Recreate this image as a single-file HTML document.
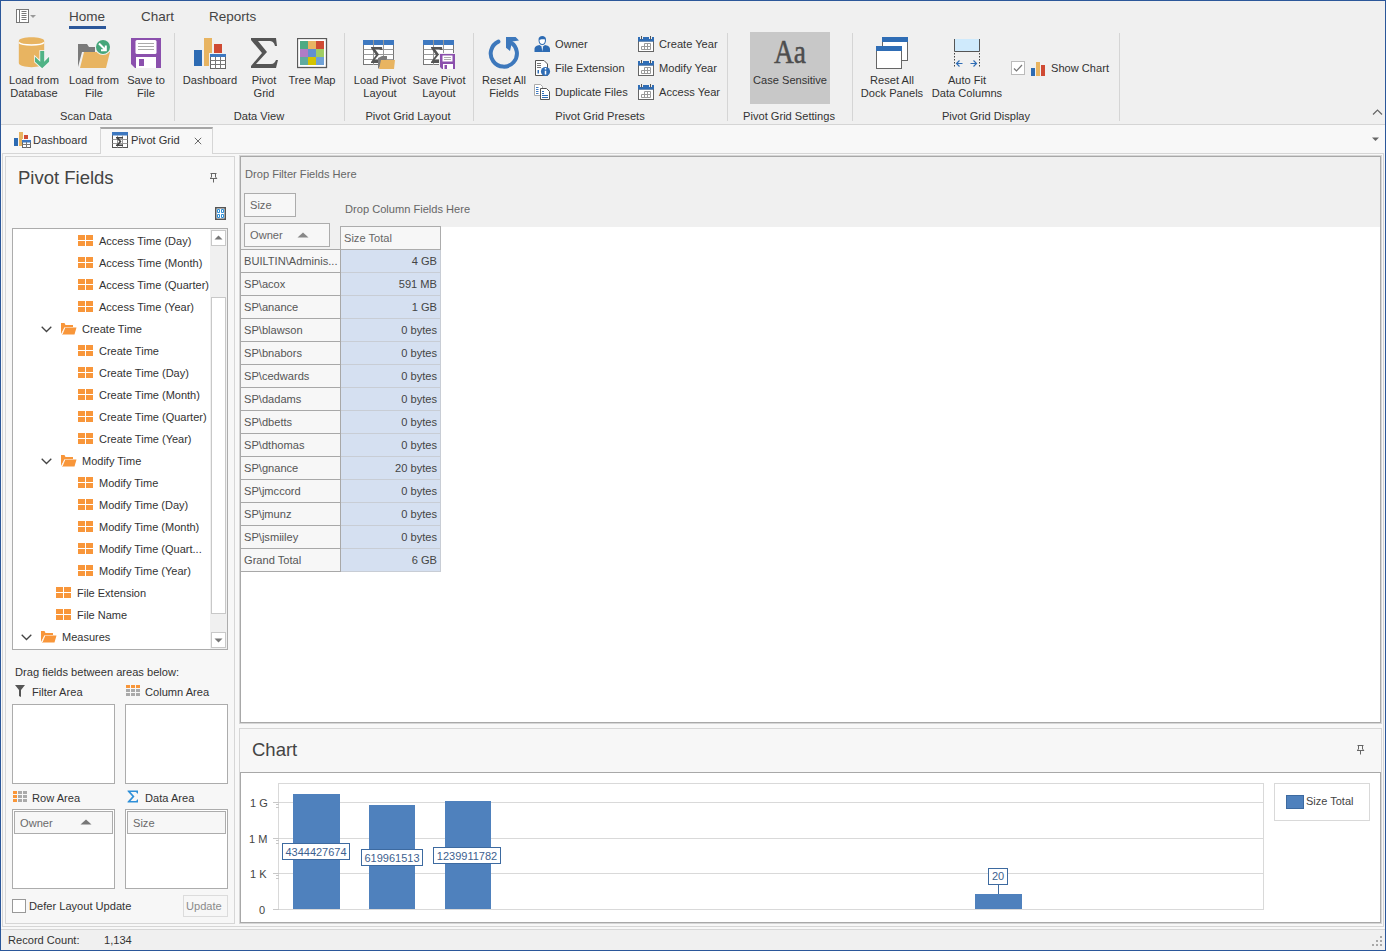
<!DOCTYPE html>
<html><head><meta charset="utf-8">
<style>
*{box-sizing:border-box;margin:0;padding:0}
html,body{width:1386px;height:951px;overflow:hidden;background:#f0f0f0;font-family:"Liberation Sans",sans-serif;color:#333;font-size:11.1px}
.a{position:absolute}
.t{position:absolute;white-space:nowrap;line-height:13px}
#win{position:absolute;left:0;top:0;width:1386px;height:951px;border:1px solid #2b579a;background:#f0f0f0}
.sep{position:absolute;width:1px;background:#d5d5d5}
.bl{position:absolute;margin-top:1px;text-align:center;white-space:nowrap;line-height:13px;color:#333}
.gl{position:absolute;margin-top:1px;text-align:center;white-space:nowrap;line-height:13px;color:#333}
</style></head><body>
<div id="win"></div>
<!-- RIBBON -->
<div class="a" style="left:1px;top:1px;width:1384px;height:123px;background:#f0f0f0"></div>
<!-- quick access -->
<svg class="a" style="left:15px;top:8px" width="22" height="16" viewBox="0 0 22 16">
<rect x="1.5" y="1.5" width="12" height="13" fill="#fff" stroke="#777" stroke-width="1"/>
<line x1="4.5" y1="2" x2="4.5" y2="14" stroke="#777"/>
<path d="M6.5 3.5h5M6.5 5.5h5M6.5 7.5h5M6.5 9.5h5M6.5 11.5h5" stroke="#777"/>
<path d="M15 7h6l-3 3z" fill="#999"/>
</svg>
<div class="t" style="left:69px;top:9px;font-size:13.5px;line-height:16px;color:#444">Home</div>
<div class="a" style="left:69px;top:26px;width:37px;height:3px;background:#2b579a"></div>
<div class="t" style="left:141px;top:9px;font-size:13.5px;line-height:16px;color:#444">Chart</div>
<div class="t" style="left:209px;top:9px;font-size:13.5px;line-height:16px;color:#444">Reports</div>
<div class="a" style="left:1px;top:124px;width:1384px;height:1px;background:#d5d5d5"></div>

<!-- Scan Data group -->
<svg class="a" style="left:18px;top:36px" width="34" height="34" viewBox="0 0 34 34">
<path d="M0.8 5 C0.8 0,26.2 0,26.2 5 L26.2 27 C26.2 32.5,0.8 32.5,0.8 27 Z" fill="#e8b461"/>
<path d="M1 6.5 C4 9.8,23 9.8,26 6.5" stroke="#fff" stroke-width="1.3" fill="none"/>
<path d="M22.2 15 H26.2 V25.7 L31.1 20.7 V25.8 L24.2 32.3 L17 25.8 V20.7 L22.2 25.7Z" fill="#50b386" stroke="#f6f6f6" stroke-width="1.6" paint-order="stroke"/>
</svg>
<svg class="a" style="left:77px;top:38px" width="34" height="32" viewBox="0 0 34 32">
<path d="M1 29 L1 6 L10 6 L12 9 L18 9 L18 14 L5 14 Z" fill="#7a7a7a"/>
<path d="M3 30 L7 14 L33 14 L29 30 Z" fill="#e8b461"/>
<circle cx="26" cy="9" r="8" fill="#f0f0f0"/>
<circle cx="26" cy="9" r="7" fill="#45a67a"/>
<path d="M22 5.5 L28.5 12 M28.8 7.5 V12.2 H24" stroke="#fff" stroke-width="2" fill="none"/>
</svg>
<svg class="a" style="left:131px;top:38px" width="30" height="30" viewBox="0 0 30 30">
<path d="M0 0 H30 V30 H4 L0 26 Z" fill="#8b50ad"/>
<rect x="4.5" y="2" width="21" height="14" rx="1.5" fill="#fff"/>
<path d="M7 5.5h16M7 8.5h16M7 11.5h16" stroke="#aaa" stroke-width="1"/>
<rect x="5" y="19" width="20" height="11" fill="#fff"/>
<rect x="8" y="21" width="5" height="7" fill="#8b50ad"/>
</svg>
<div class="bl" style="left:4px;top:73px;width:60px">Load from<br>Database</div>
<div class="bl" style="left:64px;top:73px;width:60px">Load from<br>File</div>
<div class="bl" style="left:121px;top:73px;width:50px">Save to<br>File</div>
<div class="gl" style="left:36px;top:109px;width:100px">Scan Data</div>
<div class="sep" style="left:174px;top:33px;height:88px"></div>

<!-- Data View group -->
<svg class="a" style="left:193px;top:37px" width="34" height="33" viewBox="0 0 34 33">
<rect x="1" y="13" width="8" height="16" fill="#2d6bb3"/>
<rect x="11" y="1" width="8" height="28" fill="#e8b461"/>
<rect x="21" y="7" width="8" height="9" fill="#cf4a33"/>
<rect x="16" y="16" width="18" height="17" fill="#f0f0f0"/>
<rect x="17.5" y="17.5" width="15" height="14" fill="#fff" stroke="#666" stroke-width="1"/>
<rect x="17" y="17" width="16" height="3" fill="#3d78c0"/>
<path d="M17.5 23.5h15M17.5 27.5h15M22.5 20v12M27.5 20v12" stroke="#777" stroke-width="1"/>
</svg>
<svg class="a" style="left:250px;top:37px" width="28" height="32" viewBox="0 0 28 32">
<path d="M1 1 H26 L27 9 H25 C24 5,22 4,19 4 H8 L17 15 L6 27 H21 C24 27,25 25,26 23 H28 L26 31 H1 V29 L12 16 L1 3 Z" fill="#555"/>
</svg>
<svg class="a" style="left:297px;top:38px" width="31" height="31" viewBox="0 0 31 31">
<rect x="0.5" y="0.5" width="29" height="29" fill="#fff" stroke="#5a5a5a" stroke-width="1.3"/>
<rect x="3" y="3" width="8" height="8" fill="#4daa83"/><rect x="11" y="3" width="8" height="8" fill="#e9b462"/><rect x="19" y="3" width="8" height="8" fill="#cf4a33"/>
<rect x="3" y="11" width="8" height="8" fill="#b07cc6"/><rect x="11" y="11" width="8" height="8" fill="#6290d0"/><rect x="19" y="11" width="8" height="8" fill="#a0cd63"/>
<rect x="3" y="19" width="8" height="8" fill="#5fab9f"/><rect x="11" y="19" width="8" height="8" fill="#d3c300"/><rect x="19" y="19" width="8" height="8" fill="#6fa1d6"/>
</svg>
<div class="bl" style="left:180px;top:73px;width:60px">Dashboard</div>
<div class="bl" style="left:240px;top:73px;width:48px">Pivot<br>Grid</div>
<div class="bl" style="left:284px;top:73px;width:56px">Tree Map</div>
<div class="gl" style="left:209px;top:109px;width:100px">Data View</div>
<div class="sep" style="left:344px;top:33px;height:88px"></div>

<!-- Pivot Grid Layout -->
<svg class="a" style="left:362px;top:39px" width="34" height="31" viewBox="0 0 34 31">
<rect x="1.5" y="1.5" width="30" height="24" fill="#fff" stroke="#777" stroke-width="1"/>
<rect x="1" y="1" width="31" height="5" fill="#3d78c0"/>
<path d="M1.5 10.5h30M1.5 15.5h30M1.5 20.5h30M11.5 1v25M21.5 1v25" stroke="#999" stroke-width="1"/>
<path d="M9 8 H20 L20.5 11 H18.5 C18 10,17 10,16 10 H13 L17 15.5 L12.5 21 H17 C18 21,19 20.5,19.5 19.5 H21 L20 24 H9 V23 L14 16 L9 9Z" fill="#555"/>
<path d="M16 30 V19 L20 17 L25 17 L25 20 L16 30Z" fill="#7a7a7a"/>
<path d="M17 30 L19 21 H33 L32 30Z" fill="#e8b461"/>
</svg>
<svg class="a" style="left:422px;top:39px" width="34" height="31" viewBox="0 0 34 31">
<rect x="1.5" y="1.5" width="30" height="24" fill="#fff" stroke="#777" stroke-width="1"/>
<rect x="1" y="1" width="31" height="5" fill="#3d78c0"/>
<path d="M1.5 10.5h30M1.5 15.5h30M1.5 20.5h30M11.5 1v25M21.5 1v25" stroke="#999" stroke-width="1"/>
<path d="M9 8 H20 L20.5 11 H18.5 C18 10,17 10,16 10 H13 L17 15.5 L12.5 21 H17 C18 21,19 20.5,19.5 19.5 H21 L20 24 H9 V23 L14 16 L9 9Z" fill="#555"/>
<rect x="17" y="14" width="17" height="17" fill="#f0f0f0"/>
<path d="M18 15 H33 V30 H20 L18 28Z" fill="#8b50ad"/>
<rect x="20.5" y="16.5" width="10" height="6" fill="#fff"/>
<path d="M22 18.5h7M22 20.5h7" stroke="#999" stroke-width="0.8"/>
<rect x="21" y="25" width="10" height="5" fill="#fff"/>
<rect x="22.5" y="26" width="2.5" height="4" fill="#8b50ad"/>
</svg>
<div class="bl" style="left:347px;top:73px;width:66px">Load Pivot<br>Layout</div>
<div class="bl" style="left:406px;top:73px;width:66px">Save Pivot<br>Layout</div>
<div class="gl" style="left:358px;top:109px;width:100px">Pivot Grid Layout</div>
<div class="sep" style="left:473px;top:33px;height:88px"></div>

<!-- Pivot Grid Presets -->
<svg class="a" style="left:487px;top:36px" width="34" height="34" viewBox="0 0 34 34">
<path d="M11.4 5.6 A13.1 13.1 0 1 0 23.4 6.2" stroke="#3d78bc" stroke-width="4" fill="none" stroke-linecap="round"/>
<path d="M19 1 H28.6 L32 4.6 L25.2 5.4 L23 15 L19 11.8Z" fill="#3d78bc"/>
</svg>
<div class="bl" style="left:476px;top:73px;width:56px">Reset All<br>Fields</div>

<svg class="a" style="left:534px;top:36px" width="17" height="16" viewBox="0 0 17 16">
<path d="M0.5 16 V13 C0.5 10.5,3 9.5,5.5 9 L8.3 11 L11 9 C13.5 9.5,16 10.5,16 13 V16Z" fill="#2d6bb3"/>
<path d="M7.5 10.5 L8.3 15.5 L9 10.5Z" fill="#fff"/>
<path d="M4.5 4 C4.5 1,6 0,8.3 0 C10.5 0,12 1,12 4 C12 7,10.5 9,8.3 9 C6 9,4.5 7,4.5 4Z" fill="#2d6bb3"/>
<path d="M5.5 4 C6.5 3,9 3,11 3.5 C11 6.5,10 8,8.3 8 C6.5 8,5.5 6.5,5.5 4Z" fill="#fff"/>
</svg>
<div class="t" style="left:555px;top:38px">Owner</div>
<svg class="a" style="left:534px;top:60px" width="17" height="16" viewBox="0 0 17 16">
<path d="M1.5 0.5 H10 L13.5 4 V15.5 H1.5Z" fill="#fff" stroke="#555" stroke-width="1"/>
<path d="M3 3.5h4M3 5.5h4M3 7.5h4" stroke="#777" stroke-width="1"/>
<rect x="3.5" y="10" width="1.5" height="3.5" fill="#2f6db5"/>
<circle cx="11.5" cy="11.5" r="4.6" fill="#2f6db5"/>
<path d="M11.5 10.8v3.7M11.5 8v1.5" stroke="#fff" stroke-width="1.5"/>
</svg>
<div class="t" style="left:555px;top:62px">File Extension</div>
<svg class="a" style="left:534px;top:84px" width="17" height="16" viewBox="0 0 17 16">
<path d="M0.5 0.5 H6.5 L8.5 2.5 V11.5 H0.5Z" fill="#fff" stroke="#aaa" stroke-width="1"/>
<path d="M2 3.5h2.5M2 5.5h2.5M2 7.5h2.5M2 9.5h2.5" stroke="#3d78c0" stroke-width="1"/>
<path d="M6.5 4.5 H12.5 L15.5 7.5 V15.5 H6.5Z" fill="#fff" stroke="#555" stroke-width="1"/>
<path d="M8 7.5h2M8 9.5h2M8 11.5h6M8 13.5h6" stroke="#2f6db5" stroke-width="1"/>
</svg>
<div class="t" style="left:555px;top:86px">Duplicate Files</div>
<svg class="a" style="left:637px;top:36px" width="18" height="17" viewBox="0 0 18 17"><rect x="1.5" y="5" width="15" height="10.5" fill="#fff" stroke="#666" stroke-width="1"/><path d="M1 3h16v2.5H1zM1 1h2v2H1zM6 1h6v2H6zM15 1h2v2h-2z" fill="#2f6db5"/><path d="M4.5 0v3.5M13.5 0v3.5" stroke="#555" stroke-width="1"/><path d="M4.5 10.5h9v3h-9zM7.5 7.5h6v3M7.5 7.5v6M10.5 7.5v6" stroke="#999" stroke-width="1" fill="none"/></svg>
<div class="t" style="left:659px;top:38px">Create Year</div>
<svg class="a" style="left:637px;top:60px" width="18" height="17" viewBox="0 0 18 17"><rect x="1.5" y="5" width="15" height="10.5" fill="#fff" stroke="#666" stroke-width="1"/><path d="M1 3h16v2.5H1zM1 1h2v2H1zM6 1h6v2H6zM15 1h2v2h-2z" fill="#2f6db5"/><path d="M4.5 0v3.5M13.5 0v3.5" stroke="#555" stroke-width="1"/><path d="M4.5 10.5h9v3h-9zM7.5 7.5h6v3M7.5 7.5v6M10.5 7.5v6" stroke="#999" stroke-width="1" fill="none"/></svg>
<div class="t" style="left:659px;top:62px">Modify Year</div>
<svg class="a" style="left:637px;top:84px" width="18" height="17" viewBox="0 0 18 17"><rect x="1.5" y="5" width="15" height="10.5" fill="#fff" stroke="#666" stroke-width="1"/><path d="M1 3h16v2.5H1zM1 1h2v2H1zM6 1h6v2H6zM15 1h2v2h-2z" fill="#2f6db5"/><path d="M4.5 0v3.5M13.5 0v3.5" stroke="#555" stroke-width="1"/><path d="M4.5 10.5h9v3h-9zM7.5 7.5h6v3M7.5 7.5v6M10.5 7.5v6" stroke="#999" stroke-width="1" fill="none"/></svg>
<div class="t" style="left:659px;top:86px">Access Year</div>
<div class="gl" style="left:550px;top:109px;width:100px">Pivot Grid Presets</div>
<div class="sep" style="left:727px;top:33px;height:88px"></div>

<!-- Settings -->
<div class="a" style="left:750px;top:32px;width:80px;height:72px;background:#c8c8c8"></div>
<svg class="a" style="left:770px;top:36px" width="40" height="30" viewBox="0 0 40 30"><text x="4" y="26.8" font-family="Liberation Serif" font-size="33" fill="#4d4d4d" stroke="#4d4d4d" stroke-width="0.5" textLength="32" lengthAdjust="spacingAndGlyphs">Aa</text></svg>
<div class="bl" style="left:750px;top:73px;width:80px">Case Sensitive</div>
<div class="gl" style="left:739px;top:109px;width:100px">Pivot Grid Settings</div>
<div class="sep" style="left:852px;top:33px;height:88px"></div>

<!-- Display -->
<svg class="a" style="left:875px;top:36px" width="34" height="34" viewBox="0 0 34 34">
<rect x="7.5" y="1.5" width="25" height="23" fill="#fff" stroke="#666" stroke-width="1"/>
<rect x="7" y="1" width="26" height="5" fill="#2f6db5"/>
<rect x="1.5" y="10.5" width="25" height="22" fill="#fff" stroke="#666" stroke-width="1"/>
<rect x="1" y="10" width="26" height="5" fill="#2f6db5"/>
</svg>
<div class="bl" style="left:856px;top:73px;width:72px">Reset All<br>Dock Panels</div>
<svg class="a" style="left:953px;top:38px" width="28" height="30" viewBox="0 0 28 30">
<rect x="1" y="1" width="26" height="12" fill="#cfeafc"/>
<path d="M1.5 1v12.5h25V1" stroke="#555" stroke-width="1" fill="none"/>
<path d="M1.5 15v15M26.5 15v15" stroke="#444" stroke-width="1" stroke-dasharray="1.5 1.5"/>
<path d="M3.5 25.5h6M6.5 22.5l-3 3 3 3M17.5 25.5h6M20.5 22.5l3 3-3 3" stroke="#2f6db5" stroke-width="1.2" fill="none"/>
</svg>
<div class="bl" style="left:926px;top:73px;width:82px">Auto Fit<br>Data Columns</div>
<div class="a" style="left:1011px;top:61px;width:14px;height:14px;background:#fff;border:1px solid #bbb"></div>
<svg class="a" style="left:1011px;top:61px" width="14" height="14" viewBox="0 0 14 14"><path d="M3 7.5 L5.5 10 L11 4" stroke="#777" stroke-width="1.2" fill="none"/></svg>
<svg class="a" style="left:1031px;top:61px" width="15" height="15" viewBox="0 0 15 15">
<rect x="0" y="7" width="4" height="8" fill="#2d6bb3"/><rect x="5" y="1" width="4" height="14" fill="#e8b461"/><rect x="10" y="4" width="4" height="11" fill="#cf4a33"/>
</svg>
<div class="t" style="left:1051px;top:62px">Show Chart</div>
<div class="gl" style="left:936px;top:109px;width:100px">Pivot Grid Display</div>
<div class="sep" style="left:1119px;top:33px;height:88px"></div>
<svg class="a" style="left:1372px;top:108px" width="12" height="8" viewBox="0 0 12 8"><path d="M1 6.5 L5.5 2 L10 6.5" stroke="#666" stroke-width="1.2" fill="none"/></svg>

<!-- DOC TAB STRIP -->
<div class="a" style="left:1px;top:125px;width:1384px;height:825px;background:#f8f8f8"></div>
<div class="a" style="left:2px;top:153px;width:98px;height:1px;background:#d6d6d6"></div>
<div class="a" style="left:212px;top:153px;width:1172px;height:1px;background:#d6d6d6"></div>
<div class="a" style="left:100px;top:127px;width:113px;height:27px;border:1px solid #d6d6d6;border-top:2px solid #a6a6a6;border-bottom:none;background:#f8f8f8"></div>
<svg class="a" style="left:14px;top:132px" width="17" height="16" viewBox="0 0 17 16">
<rect x="0" y="6" width="4" height="8" fill="#2d6bb3"/><rect x="5" y="0" width="4" height="14" fill="#e8b461"/><rect x="10" y="3" width="4" height="4" fill="#cf4a33"/>
<rect x="8" y="7" width="9" height="9" fill="#f8f8f8"/>
<rect x="8.5" y="8.5" width="8" height="7" fill="#fff" stroke="#666" stroke-width="1"/><rect x="8" y="8" width="9" height="2.5" fill="#3d78c0"/><path d="M8.5 12.5h8M12.5 10v6" stroke="#777" stroke-width="1"/>
</svg>
<div class="t" style="left:33px;top:134px">Dashboard</div>
<svg class="a" style="left:112px;top:132px" width="17" height="16" viewBox="0 0 17 16">
<rect x="0.5" y="0.5" width="15" height="15" fill="#fff" stroke="#555" stroke-width="1"/>
<rect x="0" y="0" width="16" height="3.5" fill="#3d78c0"/>
<path d="M0.5 7.5h15M0.5 11.5h15M5.5 3.5v12M10.5 3.5v12" stroke="#999" stroke-width="1"/>
<path d="M4 5 H11 V6.5 H7 L9.5 9.5 L7 12.5 H11 V14 H4 V13 L7.5 9.5 L4 6Z" fill="#444"/>
</svg>
<div class="t" style="left:131px;top:134px">Pivot Grid</div>
<svg class="a" style="left:194px;top:137px" width="8" height="8" viewBox="0 0 8 8"><path d="M0.8 0.8 L7.2 7.2M7.2 0.8 L0.8 7.2" stroke="#6a6a6a" stroke-width="1"/></svg>
<svg class="a" style="left:1371px;top:137px" width="9" height="5" viewBox="0 0 9 5"><path d="M1 0.5 H8 L4.5 4Z" fill="#666"/></svg>
<!-- outer container lines -->
<div class="a" style="left:1383px;top:153px;width:1px;height:774px;background:#d6d6d6"></div>
<div class="a" style="left:2px;top:153px;width:1px;height:774px;background:#d6d6d6"></div>
<div class="a" style="left:2px;top:926px;width:1382px;height:1px;background:#d6d6d6"></div>

<!-- LEFT PANEL -->
<div class="a" style="left:5px;top:156px;width:230px;height:768px;border:1px solid #d6d6d6;background:#f7f7f7"></div>
<div class="t" style="left:18px;top:167px;font-size:18.5px;line-height:22px;color:#444">Pivot Fields</div>
<svg class="a" style="left:210px;top:172px" width="8" height="11" viewBox="0 0 8 11"><path d="M0.5 1.5h6M1.5 1.5v3.5M5.5 1.5v3.5M0 6.5h7M3.5 6.5v4M1.5 5 L0.2 6.5M5.5 5 L6.8 6.5" stroke="#666" stroke-width="1" fill="none"/></svg>
<svg class="a" style="left:215px;top:207px" width="11" height="13" viewBox="0 0 11 13"><rect x="0.75" y="0.75" width="9.5" height="11.5" fill="#fff" stroke="#555" stroke-width="1.5"/><path d="M2.5 2.5h2v3h-2zM6.5 2.5h2v3h-2zM2.5 7.5h2v3h-2zM6.5 7.5h2v3h-2z" stroke="#2e8fd8" stroke-width="1" fill="none"/></svg>
<div class="a" style="left:12px;top:228px;width:216px;height:422px;border:1px solid #acacac;background:#fff;overflow:hidden"></div>

<svg class="a" style="left:78px;top:235px" width="15" height="11" viewBox="0 0 15 11"><path d="M0 0h7v5H0zM8 0h7v5H8zM0 6h7v5H0zM8 6h7v5H8z" fill="#f8963a"/></svg>
<div class="t" style="left:99px;top:235px;font-size:11px">Access Time (Day)</div>
<svg class="a" style="left:78px;top:257px" width="15" height="11" viewBox="0 0 15 11"><path d="M0 0h7v5H0zM8 0h7v5H8zM0 6h7v5H0zM8 6h7v5H8z" fill="#f8963a"/></svg>
<div class="t" style="left:99px;top:257px;font-size:11px">Access Time (Month)</div>
<svg class="a" style="left:78px;top:279px" width="15" height="11" viewBox="0 0 15 11"><path d="M0 0h7v5H0zM8 0h7v5H8zM0 6h7v5H0zM8 6h7v5H8z" fill="#f8963a"/></svg>
<div class="t" style="left:99px;top:279px;font-size:11px">Access Time (Quarter)</div>
<svg class="a" style="left:78px;top:301px" width="15" height="11" viewBox="0 0 15 11"><path d="M0 0h7v5H0zM8 0h7v5H8zM0 6h7v5H0zM8 6h7v5H8z" fill="#f8963a"/></svg>
<div class="t" style="left:99px;top:301px;font-size:11px">Access Time (Year)</div>
<svg class="a" style="left:41px;top:326px" width="11" height="7" viewBox="0 0 11 7"><path d="M0.7 0.7 L5.5 5.5 L10.3 0.7" stroke="#444" stroke-width="1.3" fill="none"/></svg>
<svg class="a" style="left:61px;top:323px" width="16" height="12" viewBox="0 0 16 12"><path d="M0 11 V0 H3.5 L4.5 2 H12 V4 H3.5 Z" fill="#f8963a"/><path d="M1 11.5 L3.5 4.5 H15.5 L13.5 11.5Z" fill="#f8963a"/><path d="M1.2 11 L3.7 5" stroke="#fff" stroke-width="0.9"/></svg>
<div class="t" style="left:82px;top:323px;font-size:11px">Create Time</div>
<svg class="a" style="left:78px;top:345px" width="15" height="11" viewBox="0 0 15 11"><path d="M0 0h7v5H0zM8 0h7v5H8zM0 6h7v5H0zM8 6h7v5H8z" fill="#f8963a"/></svg>
<div class="t" style="left:99px;top:345px;font-size:11px">Create Time</div>
<svg class="a" style="left:78px;top:367px" width="15" height="11" viewBox="0 0 15 11"><path d="M0 0h7v5H0zM8 0h7v5H8zM0 6h7v5H0zM8 6h7v5H8z" fill="#f8963a"/></svg>
<div class="t" style="left:99px;top:367px;font-size:11px">Create Time (Day)</div>
<svg class="a" style="left:78px;top:389px" width="15" height="11" viewBox="0 0 15 11"><path d="M0 0h7v5H0zM8 0h7v5H8zM0 6h7v5H0zM8 6h7v5H8z" fill="#f8963a"/></svg>
<div class="t" style="left:99px;top:389px;font-size:11px">Create Time (Month)</div>
<svg class="a" style="left:78px;top:411px" width="15" height="11" viewBox="0 0 15 11"><path d="M0 0h7v5H0zM8 0h7v5H8zM0 6h7v5H0zM8 6h7v5H8z" fill="#f8963a"/></svg>
<div class="t" style="left:99px;top:411px;font-size:11px">Create Time (Quarter)</div>
<svg class="a" style="left:78px;top:433px" width="15" height="11" viewBox="0 0 15 11"><path d="M0 0h7v5H0zM8 0h7v5H8zM0 6h7v5H0zM8 6h7v5H8z" fill="#f8963a"/></svg>
<div class="t" style="left:99px;top:433px;font-size:11px">Create Time (Year)</div>
<svg class="a" style="left:41px;top:458px" width="11" height="7" viewBox="0 0 11 7"><path d="M0.7 0.7 L5.5 5.5 L10.3 0.7" stroke="#444" stroke-width="1.3" fill="none"/></svg>
<svg class="a" style="left:61px;top:455px" width="16" height="12" viewBox="0 0 16 12"><path d="M0 11 V0 H3.5 L4.5 2 H12 V4 H3.5 Z" fill="#f8963a"/><path d="M1 11.5 L3.5 4.5 H15.5 L13.5 11.5Z" fill="#f8963a"/><path d="M1.2 11 L3.7 5" stroke="#fff" stroke-width="0.9"/></svg>
<div class="t" style="left:82px;top:455px;font-size:11px">Modify Time</div>
<svg class="a" style="left:78px;top:477px" width="15" height="11" viewBox="0 0 15 11"><path d="M0 0h7v5H0zM8 0h7v5H8zM0 6h7v5H0zM8 6h7v5H8z" fill="#f8963a"/></svg>
<div class="t" style="left:99px;top:477px;font-size:11px">Modify Time</div>
<svg class="a" style="left:78px;top:499px" width="15" height="11" viewBox="0 0 15 11"><path d="M0 0h7v5H0zM8 0h7v5H8zM0 6h7v5H0zM8 6h7v5H8z" fill="#f8963a"/></svg>
<div class="t" style="left:99px;top:499px;font-size:11px">Modify Time (Day)</div>
<svg class="a" style="left:78px;top:521px" width="15" height="11" viewBox="0 0 15 11"><path d="M0 0h7v5H0zM8 0h7v5H8zM0 6h7v5H0zM8 6h7v5H8z" fill="#f8963a"/></svg>
<div class="t" style="left:99px;top:521px;font-size:11px">Modify Time (Month)</div>
<svg class="a" style="left:78px;top:543px" width="15" height="11" viewBox="0 0 15 11"><path d="M0 0h7v5H0zM8 0h7v5H8zM0 6h7v5H0zM8 6h7v5H8z" fill="#f8963a"/></svg>
<div class="t" style="left:99px;top:543px;font-size:11px">Modify Time (Quart...</div>
<svg class="a" style="left:78px;top:565px" width="15" height="11" viewBox="0 0 15 11"><path d="M0 0h7v5H0zM8 0h7v5H8zM0 6h7v5H0zM8 6h7v5H8z" fill="#f8963a"/></svg>
<div class="t" style="left:99px;top:565px;font-size:11px">Modify Time (Year)</div>
<svg class="a" style="left:56px;top:587px" width="15" height="11" viewBox="0 0 15 11"><path d="M0 0h7v5H0zM8 0h7v5H8zM0 6h7v5H0zM8 6h7v5H8z" fill="#f8963a"/></svg>
<div class="t" style="left:77px;top:587px;font-size:11px">File Extension</div>
<svg class="a" style="left:56px;top:609px" width="15" height="11" viewBox="0 0 15 11"><path d="M0 0h7v5H0zM8 0h7v5H8zM0 6h7v5H0zM8 6h7v5H8z" fill="#f8963a"/></svg>
<div class="t" style="left:77px;top:609px;font-size:11px">File Name</div>
<svg class="a" style="left:21px;top:634px" width="11" height="7" viewBox="0 0 11 7"><path d="M0.7 0.7 L5.5 5.5 L10.3 0.7" stroke="#444" stroke-width="1.3" fill="none"/></svg>
<svg class="a" style="left:41px;top:631px" width="16" height="12" viewBox="0 0 16 12"><path d="M0 11 V0 H3.5 L4.5 2 H12 V4 H3.5 Z" fill="#f8963a"/><path d="M1 11.5 L3.5 4.5 H15.5 L13.5 11.5Z" fill="#f8963a"/><path d="M1.2 11 L3.7 5" stroke="#fff" stroke-width="0.9"/></svg>
<div class="t" style="left:62px;top:631px;font-size:11px">Measures</div>
<div class="a" style="left:210px;top:229px;width:17px;height:420px;background:#f0f0f0"></div>
<div class="a" style="left:211px;top:230px;width:15px;height:16px;background:#fff;border:1px solid #c8c8c8"></div>
<svg class="a" style="left:214px;top:235px" width="9" height="5" viewBox="0 0 9 5"><path d="M0.5 4.5 H8.5 L4.5 0.5Z" fill="#777"/></svg>
<div class="a" style="left:211px;top:297px;width:15px;height:317px;background:#fff;border:1px solid #c8c8c8"></div>
<div class="a" style="left:211px;top:632px;width:15px;height:16px;background:#fff;border:1px solid #c8c8c8"></div>
<svg class="a" style="left:214px;top:638px" width="9" height="5" viewBox="0 0 9 5"><path d="M0.5 0.5 H8.5 L4.5 4.5Z" fill="#777"/></svg>
<div class="t" style="left:15px;top:666px">Drag fields between areas below:</div>
<svg class="a" style="left:15px;top:685px" width="10" height="12" viewBox="0 0 10 12"><path d="M0 0 H10 L6 5 V12 L4 11 V5Z" fill="#555"/></svg>
<div class="t" style="left:32px;top:686px">Filter Area</div>
<svg class="a" style="left:126px;top:685px" width="14" height="11" viewBox="0 0 14 11"><path d="M0 0h4v3H0zM5 0h4v3H5zM10 0h4v3h-4z" fill="#f8963a"/><path d="M0 4h4v3H0zM5 4h4v3H5zM10 4h4v3h-4zM0 8h4v3H0zM5 8h4v3H5zM10 8h4v3h-4z" fill="#aaa"/></svg>
<div class="t" style="left:145px;top:686px">Column Area</div>
<div class="a" style="left:12px;top:704px;width:103px;height:80px;border:1px solid #acacac;background:#fff"></div>
<div class="a" style="left:125px;top:704px;width:103px;height:80px;border:1px solid #acacac;background:#fff"></div>
<svg class="a" style="left:13px;top:791px" width="14" height="11" viewBox="0 0 14 11"><path d="M0 0h4v3H0zM0 4h4v3H0zM0 8h4v3H0z" fill="#f8963a"/><path d="M5 0h4v3H5zM10 0h4v3h-4zM5 4h4v3H5zM10 4h4v3h-4zM5 8h4v3H5zM10 8h4v3h-4z" fill="#aaa"/></svg>
<div class="t" style="left:32px;top:792px">Row Area</div>
<svg class="a" style="left:127px;top:790px" width="12" height="13" viewBox="0 0 12 13"><path d="M0.5 0.5 H11 V3.5 H10 C10 2.5,9 2,8 2 H3.5 L7.5 6.5 L3.5 11 H8 C9 11,10 10.5,10 9.5 H11 V12.5 H0.5 V11.8 L5.3 6.5 L0.5 1.2Z" fill="#2e8fd8"/></svg>
<div class="t" style="left:145px;top:792px">Data Area</div>
<div class="a" style="left:12px;top:809px;width:103px;height:80px;border:1px solid #acacac;background:#fff"></div>
<div class="a" style="left:14px;top:811px;width:99px;height:23px;border:1px solid #acacac;background:#f7f7f7"></div>
<div class="t" style="left:20px;top:817px;color:#6a6a6a">Owner</div>
<svg class="a" style="left:80px;top:819px" width="12" height="6" viewBox="0 0 12 6"><path d="M0.5 5.5 H11.5 L6 0.5Z" fill="#777"/></svg>
<div class="a" style="left:125px;top:809px;width:103px;height:80px;border:1px solid #acacac;background:#fff"></div>
<div class="a" style="left:127px;top:811px;width:99px;height:23px;border:1px solid #acacac;background:#f7f7f7"></div>
<div class="t" style="left:133px;top:817px;color:#6a6a6a">Size</div>
<div class="a" style="left:12px;top:899px;width:14px;height:14px;border:1px solid #999;background:#fff"></div>
<div class="t" style="left:29px;top:900px">Defer Layout Update</div>
<div class="a" style="left:183px;top:895px;width:45px;height:22px;border:1px solid #dcdcdc;background:#f7f7f7"></div>
<div class="t" style="left:186px;top:900px;color:#8a8a8a">Update</div>

<!-- PIVOT GRID PANEL -->
<div class="a" style="left:239px;top:155px;width:1143px;height:569px;border:1px solid #d6d6d6;background:#fff"></div>
<div class="a" style="left:240px;top:156px;width:1141px;height:567px;border-left:1px solid #a8a8a8;border-top:1px solid #a8a8a8;border-right:1px solid #a8a8a8;border-bottom:1px solid #a8a8a8"></div>
<div class="a" style="left:241px;top:157px;width:1139px;height:70px;background:#f0f0f0"></div>
<div class="a" style="left:241px;top:227px;width:99px;height:22px;background:#f0f0f0"></div>
<div class="a" style="left:241px;top:249px;width:100px;height:1px;background:#a8a8a8"></div>
<div class="t" style="left:245px;top:168px;color:#666">Drop Filter Fields Here</div>
<div class="a" style="left:244px;top:193px;width:52px;height:24px;border:1px solid #acacac;background:#f7f7f7"></div>
<div class="t" style="left:250px;top:199px;color:#666">Size</div>
<div class="t" style="left:345px;top:203px;color:#666">Drop Column Fields Here</div>
<div class="a" style="left:244px;top:223px;width:86px;height:24px;border:1px solid #acacac;background:#f7f7f7"></div>
<div class="t" style="left:250px;top:229px;color:#666">Owner</div>
<svg class="a" style="left:297px;top:232px" width="12" height="6" viewBox="0 0 12 6"><path d="M0.5 5.5 H11.5 L6 0.5Z" fill="#888"/></svg>
<div class="a" style="left:340px;top:226px;width:101px;height:24px;border:1px solid #acacac;background:#f7f7f7"></div>
<div class="t" style="left:344px;top:232px;color:#666">Size Total</div>
<div class="a" style="left:240px;top:249px;width:1px;height:323px;background:#a8a8a8"></div>
<div class="a" style="left:241px;top:250px;width:100px;height:23px;background:#f7f7f7;border-bottom:1px solid #a8a8a8;border-right:1px solid #a8a8a8"></div>
<div class="a" style="left:341px;top:250px;width:100px;height:23px;background:#d5e0f1;border-bottom:1px solid #c8cdd5;border-right:1px solid #c8cdd5"></div>
<div class="t" style="left:244px;top:255px;color:#555">BUILTIN\Adminis...</div>
<div class="t" style="left:341px;width:96px;text-align:right;top:255px;color:#444">4 GB</div>
<div class="a" style="left:241px;top:273px;width:100px;height:23px;background:#f7f7f7;border-bottom:1px solid #a8a8a8;border-right:1px solid #a8a8a8"></div>
<div class="a" style="left:341px;top:273px;width:100px;height:23px;background:#d5e0f1;border-bottom:1px solid #c8cdd5;border-right:1px solid #c8cdd5"></div>
<div class="t" style="left:244px;top:278px;color:#555">SP\acox</div>
<div class="t" style="left:341px;width:96px;text-align:right;top:278px;color:#444">591 MB</div>
<div class="a" style="left:241px;top:296px;width:100px;height:23px;background:#f7f7f7;border-bottom:1px solid #a8a8a8;border-right:1px solid #a8a8a8"></div>
<div class="a" style="left:341px;top:296px;width:100px;height:23px;background:#d5e0f1;border-bottom:1px solid #c8cdd5;border-right:1px solid #c8cdd5"></div>
<div class="t" style="left:244px;top:301px;color:#555">SP\anance</div>
<div class="t" style="left:341px;width:96px;text-align:right;top:301px;color:#444">1 GB</div>
<div class="a" style="left:241px;top:319px;width:100px;height:23px;background:#f7f7f7;border-bottom:1px solid #a8a8a8;border-right:1px solid #a8a8a8"></div>
<div class="a" style="left:341px;top:319px;width:100px;height:23px;background:#d5e0f1;border-bottom:1px solid #c8cdd5;border-right:1px solid #c8cdd5"></div>
<div class="t" style="left:244px;top:324px;color:#555">SP\blawson</div>
<div class="t" style="left:341px;width:96px;text-align:right;top:324px;color:#444">0 bytes</div>
<div class="a" style="left:241px;top:342px;width:100px;height:23px;background:#f7f7f7;border-bottom:1px solid #a8a8a8;border-right:1px solid #a8a8a8"></div>
<div class="a" style="left:341px;top:342px;width:100px;height:23px;background:#d5e0f1;border-bottom:1px solid #c8cdd5;border-right:1px solid #c8cdd5"></div>
<div class="t" style="left:244px;top:347px;color:#555">SP\bnabors</div>
<div class="t" style="left:341px;width:96px;text-align:right;top:347px;color:#444">0 bytes</div>
<div class="a" style="left:241px;top:365px;width:100px;height:23px;background:#f7f7f7;border-bottom:1px solid #a8a8a8;border-right:1px solid #a8a8a8"></div>
<div class="a" style="left:341px;top:365px;width:100px;height:23px;background:#d5e0f1;border-bottom:1px solid #c8cdd5;border-right:1px solid #c8cdd5"></div>
<div class="t" style="left:244px;top:370px;color:#555">SP\cedwards</div>
<div class="t" style="left:341px;width:96px;text-align:right;top:370px;color:#444">0 bytes</div>
<div class="a" style="left:241px;top:388px;width:100px;height:23px;background:#f7f7f7;border-bottom:1px solid #a8a8a8;border-right:1px solid #a8a8a8"></div>
<div class="a" style="left:341px;top:388px;width:100px;height:23px;background:#d5e0f1;border-bottom:1px solid #c8cdd5;border-right:1px solid #c8cdd5"></div>
<div class="t" style="left:244px;top:393px;color:#555">SP\dadams</div>
<div class="t" style="left:341px;width:96px;text-align:right;top:393px;color:#444">0 bytes</div>
<div class="a" style="left:241px;top:411px;width:100px;height:23px;background:#f7f7f7;border-bottom:1px solid #a8a8a8;border-right:1px solid #a8a8a8"></div>
<div class="a" style="left:341px;top:411px;width:100px;height:23px;background:#d5e0f1;border-bottom:1px solid #c8cdd5;border-right:1px solid #c8cdd5"></div>
<div class="t" style="left:244px;top:416px;color:#555">SP\dbetts</div>
<div class="t" style="left:341px;width:96px;text-align:right;top:416px;color:#444">0 bytes</div>
<div class="a" style="left:241px;top:434px;width:100px;height:23px;background:#f7f7f7;border-bottom:1px solid #a8a8a8;border-right:1px solid #a8a8a8"></div>
<div class="a" style="left:341px;top:434px;width:100px;height:23px;background:#d5e0f1;border-bottom:1px solid #c8cdd5;border-right:1px solid #c8cdd5"></div>
<div class="t" style="left:244px;top:439px;color:#555">SP\dthomas</div>
<div class="t" style="left:341px;width:96px;text-align:right;top:439px;color:#444">0 bytes</div>
<div class="a" style="left:241px;top:457px;width:100px;height:23px;background:#f7f7f7;border-bottom:1px solid #a8a8a8;border-right:1px solid #a8a8a8"></div>
<div class="a" style="left:341px;top:457px;width:100px;height:23px;background:#d5e0f1;border-bottom:1px solid #c8cdd5;border-right:1px solid #c8cdd5"></div>
<div class="t" style="left:244px;top:462px;color:#555">SP\gnance</div>
<div class="t" style="left:341px;width:96px;text-align:right;top:462px;color:#444">20 bytes</div>
<div class="a" style="left:241px;top:480px;width:100px;height:23px;background:#f7f7f7;border-bottom:1px solid #a8a8a8;border-right:1px solid #a8a8a8"></div>
<div class="a" style="left:341px;top:480px;width:100px;height:23px;background:#d5e0f1;border-bottom:1px solid #c8cdd5;border-right:1px solid #c8cdd5"></div>
<div class="t" style="left:244px;top:485px;color:#555">SP\jmccord</div>
<div class="t" style="left:341px;width:96px;text-align:right;top:485px;color:#444">0 bytes</div>
<div class="a" style="left:241px;top:503px;width:100px;height:23px;background:#f7f7f7;border-bottom:1px solid #a8a8a8;border-right:1px solid #a8a8a8"></div>
<div class="a" style="left:341px;top:503px;width:100px;height:23px;background:#d5e0f1;border-bottom:1px solid #c8cdd5;border-right:1px solid #c8cdd5"></div>
<div class="t" style="left:244px;top:508px;color:#555">SP\jmunz</div>
<div class="t" style="left:341px;width:96px;text-align:right;top:508px;color:#444">0 bytes</div>
<div class="a" style="left:241px;top:526px;width:100px;height:23px;background:#f7f7f7;border-bottom:1px solid #a8a8a8;border-right:1px solid #a8a8a8"></div>
<div class="a" style="left:341px;top:526px;width:100px;height:23px;background:#d5e0f1;border-bottom:1px solid #c8cdd5;border-right:1px solid #c8cdd5"></div>
<div class="t" style="left:244px;top:531px;color:#555">SP\jsmiiley</div>
<div class="t" style="left:341px;width:96px;text-align:right;top:531px;color:#444">0 bytes</div>
<div class="a" style="left:241px;top:549px;width:100px;height:23px;background:#f7f7f7;border-bottom:1px solid #a8a8a8;border-right:1px solid #a8a8a8"></div>
<div class="a" style="left:341px;top:549px;width:100px;height:23px;background:#d5e0f1;border-bottom:1px solid #c8cdd5;border-right:1px solid #c8cdd5"></div>
<div class="t" style="left:244px;top:554px;color:#555">Grand Total</div>
<div class="t" style="left:341px;width:96px;text-align:right;top:554px;color:#444">6 GB</div>
<!-- CHART PANEL -->
<div class="a" style="left:239px;top:728px;width:1143px;height:196px;border:1px solid #d6d6d6;background:#f7f7f7"></div>
<div class="t" style="left:252px;top:739px;font-size:18.5px;line-height:22px;color:#444">Chart</div>
<svg class="a" style="left:1357px;top:744px" width="8" height="11" viewBox="0 0 8 11"><path d="M0.5 1.5h6M1.5 1.5v3.5M5.5 1.5v3.5M0 6.5h7M3.5 6.5v4M1.5 5 L0.2 6.5M5.5 5 L6.8 6.5" stroke="#666" stroke-width="1" fill="none"/></svg>
<div class="a" style="left:240px;top:772px;width:1141px;height:151px;border:1px solid #a8a8a8;background:#fff"></div>
<svg class="a" style="left:242px;top:774px" width="1138" height="148" viewBox="242 774 1138 148">
<rect x="278.5" y="783.5" width="985" height="126" fill="none" stroke="#d9d9d9" stroke-width="1"/>
<path d="M278 802.5H1263M278 838.5H1263M278 873.5H1263" stroke="#d9d9d9" stroke-width="1"/>
<path d="M273 802.5h6M273 838.5h6M273 873.5h6M273 909.5h6M276 804.5h3M276 807.5h3M276 840.5h3M276 843.5h3M276 875.5h3M276 878.5h3" stroke="#c8c8c8" stroke-width="1"/>
<rect x="293" y="794" width="47" height="115" fill="#4f81bd"/>
<rect x="369" y="805" width="46" height="104" fill="#4f81bd"/>
<rect x="445" y="801" width="46" height="108" fill="#4f81bd"/>
<rect x="975" y="894" width="47" height="15" fill="#4f81bd"/>
<path d="M998.5 885v9" stroke="#3d6aa0" stroke-width="1"/>
</svg>
<div class="t" style="left:250px;top:797px;font-size:11px;color:#444">1 G</div>
<div class="t" style="left:249px;top:833px;font-size:11px;color:#444">1 M</div>
<div class="t" style="left:250px;top:868px;font-size:11px;color:#444">1 K</div>
<div class="t" style="left:259px;top:904px;font-size:11px;color:#444">0</div>
<div class="a" style="left:282px;top:843px;width:68px;height:17px;border:1px solid #3d6aa0;background:#fff"></div>
<div class="t" style="left:282px;width:68px;text-align:center;top:846px;font-size:11px;color:#3d5f8f">4344427674</div>
<div class="a" style="left:361px;top:849px;width:62px;height:17px;border:1px solid #3d6aa0;background:#fff"></div>
<div class="t" style="left:361px;width:62px;text-align:center;top:852px;font-size:11px;color:#3d5f8f">619961513</div>
<div class="a" style="left:433px;top:847px;width:68px;height:17px;border:1px solid #3d6aa0;background:#fff"></div>
<div class="t" style="left:433px;width:68px;text-align:center;top:850px;font-size:11px;color:#3d5f8f">1239911782</div>
<div class="a" style="left:988px;top:868px;width:20px;height:17px;border:1px solid #3d6aa0;background:#fff"></div>
<div class="t" style="left:988px;width:20px;text-align:center;top:870px;font-size:11px;color:#3d5f8f">20</div>
<div class="a" style="left:1274px;top:783px;width:96px;height:38px;border:1px solid #d9d9d9;background:#fff"></div>
<div class="a" style="left:1286px;top:795px;width:18px;height:14px;background:#4f81bd;border:1px solid #3d6aa0"></div>
<div class="t" style="left:1306px;top:795px;font-size:11px;color:#444">Size Total</div>

<!-- STATUS BAR -->
<div class="a" style="left:1px;top:929px;width:1384px;height:21px;background:#f0f0f0;border-top:1px solid #d6d6d6"></div>
<div class="t" style="left:8px;top:934px">Record Count:</div>
<div class="t" style="left:104px;top:934px">1,134</div>
<svg class="a" style="left:1372px;top:936px" width="12" height="12" viewBox="0 0 12 12"><path d="M8 0h2v2H8zM4 4h2v2H4zM8 4h2v2H8zM0 8h2v2H0zM4 8h2v2H4zM8 8h2v2H8z" fill="#a8a8a8"/></svg>
</body></html>
